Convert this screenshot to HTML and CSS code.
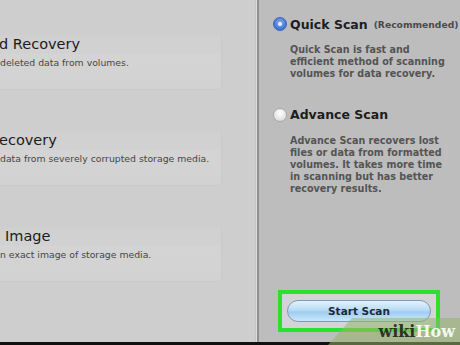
FILE: index.html
```html
<!DOCTYPE html>
<html>
<head>
<meta charset="utf-8">
<link rel="stylesheet" href="styles.css">
</head>
<body>
<div class="app">
  <div class="main">
    <div class="left">
      <div class="card">
        <div class="card-title t1">d Recovery</div>
        <div class="card-sub">deleted data from volumes.</div>
      </div>
      <div class="card">
        <div class="card-title t2">ecovery</div>
        <div class="card-sub">data from severely corrupted storage media.</div>
      </div>
      <div class="card">
        <div class="card-title t3">Image</div>
        <div class="card-sub">n exact image of storage media.</div>
      </div>
    </div>
    <div class="right">
      <div class="option">
        <div class="opt-head">
          <span class="radio on"></span>
          <span class="opt-name">Quick Scan</span>
          <span class="opt-note">(Recommended)</span>
        </div>
        <p class="opt-desc">Quick Scan is fast and<br>efficient method of scanning<br>volumes for data recovery.</p>
      </div>
      <div class="option">
        <div class="opt-head">
          <span class="radio"></span>
          <span class="opt-name">Advance Scan</span>
        </div>
        <p class="opt-desc">Advance Scan recovers lost<br>files or data from formatted<br>volumes. It takes more time<br>in scanning but has better<br>recovery results.</p>
      </div>
      <div class="spacer"></div>
      <div class="highlight">
        <button class="start">Start Scan</button>
      </div>
    </div>
  </div>
  <div class="bottom"></div>
  <div class="wm"><span class="wm-wiki">wiki</span><span class="wm-how">How</span></div>
</div>
</body>
</html>
```

FILE: styles.css
```css
html, body {
  margin: 0;
  padding: 0;
  width: 460px;
  height: 345px;
  overflow: hidden;
  font-family: "DejaVu Sans", "Liberation Sans", sans-serif;
}

.app {
  position: relative;
  width: 460px;
  height: 345px;
  display: flex;
  flex-direction: column;
  background: #000;
}

.main {
  flex: 1;
  display: flex;
  min-height: 0;
}

.bottom {
  height: 3px;
  background: #111;
}

.left {
  width: 256px;
  background: #cecece;
  border-right: 1px solid #dcdcdc;
  box-shadow: inset -1px 0 0 #c4c4c4;
  padding-top: 35px;
  display: flex;
  flex-direction: column;
  gap: 41px;
}

.card {
  width: 222px;
  height: 55px;
  box-sizing: border-box;
  background: linear-gradient(#d0d0d0, #d2d2d2 35%, #d4d4d4 36%, #d2d2d2);
  border-radius: 0 4px 4px 0;
  border-right: 1px solid #c9c9c9;
  border-bottom: 1px solid #c9c9c9;
  padding-top: 1px;
  overflow: hidden;
}

.card-title {
  font-size: 14.5px;
  color: #1c1c1c;
  line-height: 17px;
  white-space: nowrap;
}

.t1 { margin-left: -1px; }
.t2 { margin-left: -1px; }
.t3 { margin-left: 5px; }

.card-sub {
  font-size: 9.3px;
  color: #464646;
  line-height: 12px;
  margin-top: 4px;
  white-space: nowrap;
}

.right {
  flex: 1;
  background: #bdbdbd;
  border-left: 2px solid #8f8f8f;
  display: flex;
  flex-direction: column;
  padding: 16px 0 10px 14px;
}

.option {
  display: flex;
  flex-direction: column;
}

.opt-head {
  display: flex;
  align-items: center;
  gap: 3px;
  height: 16px;
}

.radio {
  width: 14px;
  height: 14px;
  border-radius: 50%;
  box-sizing: border-box;
  border: 1px solid #a8a8a8;
  background: radial-gradient(circle at 50% 35%, #ffffff, #e6e6e6 60%, #d2d2d2);
  position: relative;
  flex: none;
}

.radio.on {
  border-color: #3a63b8;
  background: radial-gradient(circle at 50% 40%, #8fb4ee, #4a7fd8 55%, #2f5fc0);
}

.radio.on::after {
  content: "";
  position: absolute;
  left: 4px;
  top: 4px;
  width: 4px;
  height: 4px;
  border-radius: 50%;
  background: #e8f0ff;
}

.opt-name {
  font-size: 12.5px;
  font-weight: bold;
  color: #1e1e1e;
}

.opt-note {
  font-size: 9.2px;
  font-weight: bold;
  color: #4a4a4a;
  margin-left: 3px;
}

.opt-desc {
  margin: 12px 0 0 17px;
  font-size: 9.6px;
  font-weight: bold;
  line-height: 12.2px;
  color: #545454;
  white-space: nowrap;
}

.option + .option {
  margin-top: 26px;
}

.spacer {
  flex: 1;
}

.highlight {
  width: 162px;
  height: 42px;
  box-sizing: border-box;
  border: 4px solid #2ee02e;
  background: #d4d4d4;
  margin-left: 5px;
  display: flex;
  align-items: center;
  justify-content: center;
}

.start {
  width: 144px;
  height: 22px;
  border-radius: 11px;
  border: 1px solid #7f9bb4;
  background: linear-gradient(#e3f2fd, #b9dcf4 45%, #9fcdef 55%, #c9e7fb);
  font-family: "DejaVu Sans", sans-serif;
  font-size: 10.5px;
  font-weight: bold;
  color: #1e2a36;
  padding: 0;
}

.wm {
  position: absolute;
  right: 0;
  bottom: 0;
  width: 132px;
  height: 27px;
  background: rgba(150, 180, 110, 0.55);
  clip-path: polygon(24px 0, 100% 0, 100% 100%, 0 100%);
  display: flex;
  align-items: center;
  justify-content: flex-end;
  padding-right: 5px;
  box-sizing: border-box;
  font-family: "DejaVu Serif", "Liberation Serif", serif;
  font-weight: bold;
  font-size: 16px;
}

.wm-wiki { color: #2b3325; }
.wm-how { color: #f4f8ee; }
```
